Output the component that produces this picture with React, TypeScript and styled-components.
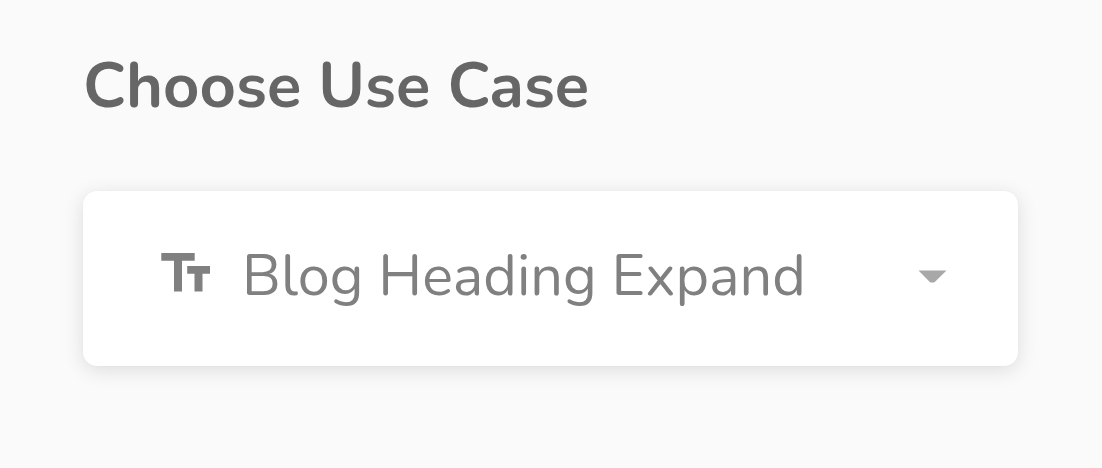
import React from "react";
import styled, { createGlobalStyle } from "styled-components";

const GlobalStyle = createGlobalStyle`
  * { box-sizing: border-box; }
  body { margin: 0; background: #fafafa; font-family: Nunito, Lato, sans-serif; }
`;

const Panel = styled.main`
  display: flex;
  flex-direction: column;
  height: 468px;
  padding: 42px 83px 0 83px;
  overflow: hidden;
`;

const Title = styled.h1`
  margin: 0 0 61px;
  height: 88px;
  font-size: 63.3px;
  line-height: 88px;
  font-weight: 700;
  color: #666;
  white-space: nowrap;
`;

const Select = styled.button`
  display: flex;
  align-items: center;
  width: 935px;
  height: 175px;
  padding: 0 71px 5px 78px;
  border: 0;
  border-radius: 14px;
  background: #fff;
  box-shadow: 0 4px 20px rgba(0, 0, 0, 0.12), 0 0 2px rgba(0, 0, 0, 0.03);
  font-family: inherit;
  text-align: left;
`;

const TextIcon = styled.svg`
  flex: none;
  width: 50px;
  height: 40px;
  margin: 0 31px 8px 0;
  fill: #808080;
`;

const Label = styled.span`
  flex: 1;
  font-size: 57.6px;
  line-height: 80px;
  color: #808080;
  white-space: nowrap;
`;

const Caret = styled.svg`
  flex: none;
  width: 29px;
  height: 13px;
  fill: #a8a8a8;
`;

export default function App() {
  return (
    <>
      <GlobalStyle />
      <Panel>
        <Title>Choose Use Case</Title>
        <Select type="button" aria-haspopup="listbox">
          <TextIcon viewBox="0 0 50 40" aria-hidden="true">
            <path d="M.3 1h33.4v7.7H21v30.8h-8V8.7H.3zM26.2 14H49v7.7h-7.5v17.8h-8V21.7h-7.3z" />
          </TextIcon>
          <Label>Blog Heading Expand</Label>
          <Caret viewBox="0 0 29 13" aria-hidden="true">
            <path d="M.5.5h28L16.8 12q-.7.6-1.5.6h-2q-.8 0-1.5-.6z" />
          </Caret>
        </Select>
      </Panel>
    </>
  );
}
